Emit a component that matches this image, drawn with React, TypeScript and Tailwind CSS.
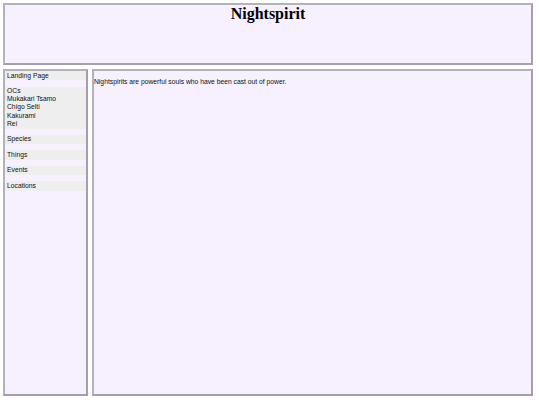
import React from "react";

const sectionCls = "bg-[#eeeeee] py-[0.5px] pl-[2px] mb-[6.3px] leading-[8.2px]";

export default function App() {
  return (
    <div className="w-[540px] h-[405px] bg-white pt-[3px] pl-[3px] font-['Liberation_Sans',Arial,sans-serif] text-[6.75px] text-[#111]">
      <header className="w-[530px] h-[62px] bg-[#f7f0fe] border-2 border-t-[#b4b2b8] border-l-[#b4b2b8] border-b-[#a49eae] border-r-[#a49eae]">
        <h1 className="m-0 text-center font-['Liberation_Serif','Times_New_Roman',serif] font-bold text-[16px] leading-[18px] text-black">
          Nightspirit
        </h1>
      </header>
      <div className="flex gap-[4px] mt-[4px]">
        <nav className="w-[85px] h-[327px] bg-[#f7f0fe] border-2 border-t-[#b4b2b8] border-l-[#b4b2b8] border-b-[#a49eae] border-r-[#a49eae]">
          <div className={sectionCls}>Landing Page</div>
          <div className={sectionCls}>
            <div>OCs</div>
            <div>Mukakari Tsamo</div>
            <div>Chigo Selti</div>
            <div>Kakurami</div>
            <div>Rei</div>
          </div>
          <div className={sectionCls}>Species</div>
          <div className={sectionCls}>Things</div>
          <div className={sectionCls}>Events</div>
          <div className={sectionCls}>Locations</div>
        </nav>
        <main className="w-[441px] h-[327px] bg-[#f7f0fe] border-2 border-t-[#b4b2b8] border-l-[#b4b2b8] border-b-[#a49eae] border-r-[#a49eae] pt-[7px]">
          <p className="leading-[8px]">
            Nightspirits are powerful souls who have been cast out of power.
          </p>
        </main>
      </div>
    </div>
  );
}
